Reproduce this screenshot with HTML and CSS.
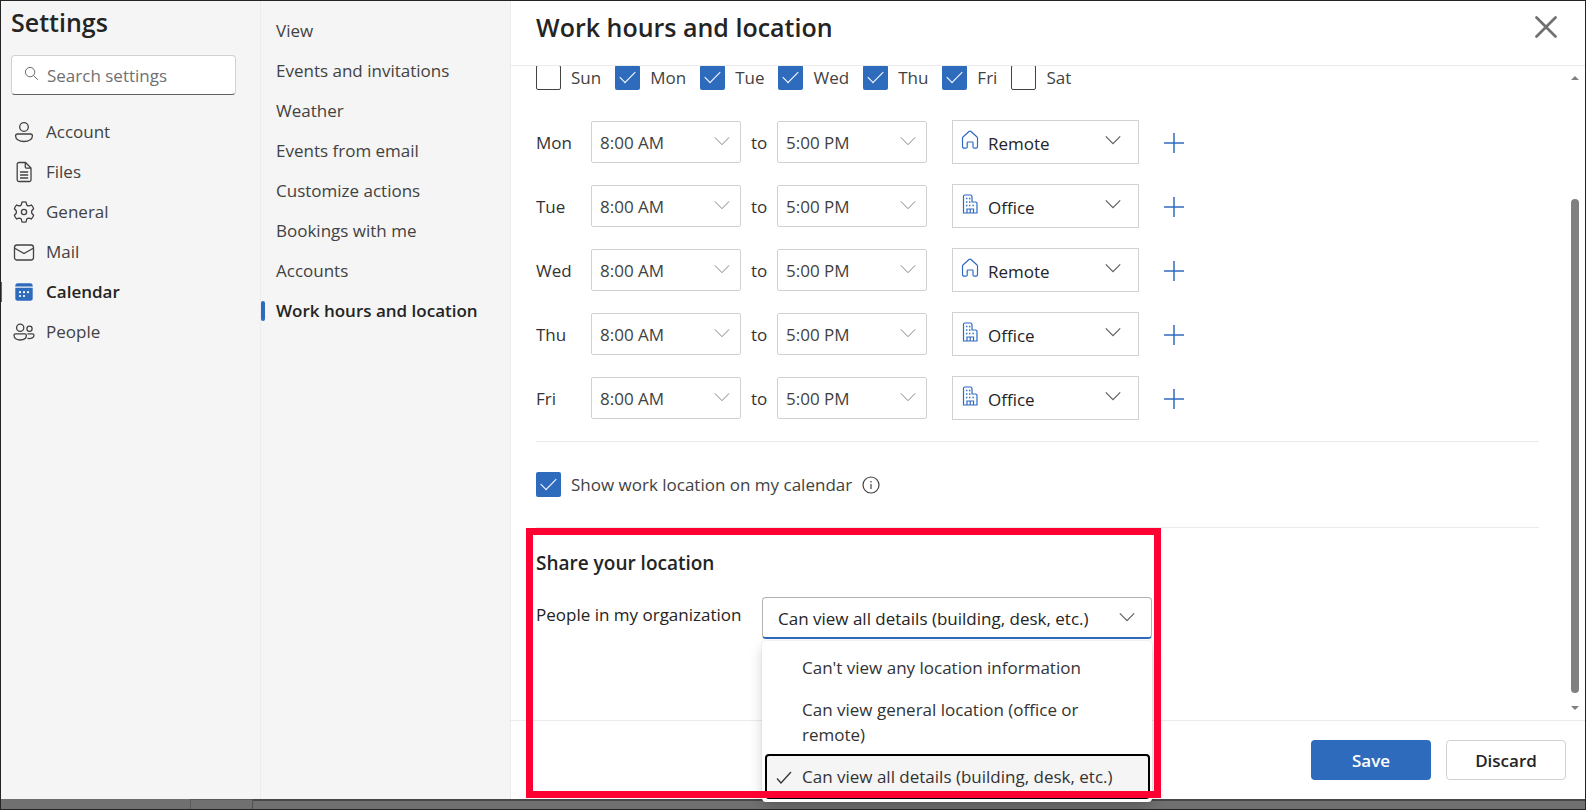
FILE: index.html
```html
<!DOCTYPE html>
<html lang="en">
<head>
<meta charset="utf-8">
<title>Settings - Work hours and location</title>
<link rel="stylesheet" href="styles.css">
</head>
<body>
<svg class="sprite" aria-hidden="true">
  <symbol id="chevron" viewBox="0 0 16 16"><path d="M.8 4.3 8 11.7l7.2-7.4"/></symbol>
  <symbol id="plus" viewBox="0 0 20 20"><path d="M10 0v20M0 10h20"/></symbol>
  <symbol id="home" viewBox="0 0 18 20"><path d="M1.5 8.2c0-.6.2-1.1.7-1.5L8 1.5c.6-.5 1.4-.5 2 0l5.800 5.200c.4.4.7.9.7 1.500v8.300c0 1-.7 1.700-1.700 1.700h-1.600c-.7 0-1.200-.5-1.200-1.200v-4.200c0-.5-.4-.8-.8-.8H7c-.5 0-.8.300-.8.800V17c0 .7-.5 1.200-1.200 1.200H3.200c-1 0-1.700-.7-1.700-1.700z"/></symbol>
  <symbol id="office" viewBox="0 0 18 20"><path d="M2.500 19V2.500C2.500 1.500 3 1 4 1h5.500c1 0 1.500.5 1.500 1.500V8h3.500c1 0 1.500.5 1.500 1.500V19zM6 19v-4h6.500v4M9.200 15v4"/><path class="dots" d="M5 4.500h1.400M8 4.500h1.400M5 8h1.400M8 8h1.400M5 11.500h1.400M8 11.500h1.400M11.500 11.500h1.400"/></symbol>
</svg>
<div class="dialog">
  <aside class="sidebar">
    <h1>Settings</h1>
    <label class="search">
      <svg viewBox="0 0 16 16"><circle cx="6.500" cy="6.500" r="5"/><path d="m10.200 10.200 4.500 4.500"/></svg>
      <input type="search" placeholder="Search settings" aria-label="Search settings">
    </label>
    <nav class="nav" aria-label="Settings sections">
      <a href="#account"><svg viewBox="0 0 22 22"><circle cx="11" cy="6" r="4.300"/><path d="M4.500 13h13c1.200 0 1.900.7 1.900 1.900 0 3.500-3.800 5.600-8.400 5.600s-8.400-2.100-8.400-5.600c0-1.200.7-1.900 1.900-1.900z"/></svg>Account</a>
      <a href="#files"><svg viewBox="0 0 22 22"><path d="M6 1.500h6.500l5.500 5.500v12c0 1-.6 1.500-1.500 1.500H6c-1 0-1.800-.6-1.800-1.500V3.200C4.200 2.100 5 1.500 6 1.500zM12.300 1.700v4c0 1 .6 1.500 1.500 1.500h4M7 11h8.200M7 14h8.200M7 17h8.200"/></svg>Files</a>
      <a href="#general"><svg viewBox="0 0 22 22"><circle cx="11" cy="11" r="2.600"/><path d="M8.900 1.200Q11 .7 13.100 1.200L13.700 3.900Q14.800 4.900 16.100 4.900L18.500 4.100Q20.100 5.700 20.600 7.800L18.800 9.700Q18.400 11 18.800 12.300L20.600 14.200Q20.100 16.300 18.500 17.900L16.100 17.100Q14.800 17.100 13.700 18.100L13.100 20.800Q11 21.300 8.900 20.800L8.300 18.100Q7.200 17.100 5.900 17.100L3.500 17.900Q1.900 16.300 1.400 14.200L3.200 12.300Q3.600 11 3.200 9.700L1.400 7.800Q1.900 5.700 3.500 4.100L5.900 4.900Q7.200 4.900 8.300 3.900z"/></svg>General</a>
      <a href="#mail"><svg viewBox="0 0 22 22"><rect x="1.500" y="4" width="19" height="15" rx="2.500"/><path d="m1.800 7.200 9.200 5.300 9.200-5.300"/></svg>Mail</a>
      <a href="#calendar" class="current" aria-current="true"><svg class="solid" viewBox="0 0 22 22"><path class="fill" d="M2.300 5.500V4.600c0-1.300 1-2.300 2.300-2.300h12.800c1.300 0 2.300 1 2.300 2.300v.9zM2.300 6.800h17.400v10.600c0 1.300-1 2.300-2.300 2.300H4.600c-1.300 0-2.300-1-2.300-2.300z"/><g class="hole"><circle cx="7" cy="11.200" r="1.100"/><circle cx="11" cy="11.200" r="1.100"/><circle cx="15" cy="11.200" r="1.100"/><circle cx="7" cy="15" r="1.100"/><circle cx="11" cy="15" r="1.100"/></g></svg>Calendar</a>
      <a href="#people"><svg viewBox="0 0 22 22"><circle cx="7.200" cy="6.800" r="3.600"/><circle cx="16.500" cy="7.800" r="2.600"/><path d="M2.500 12.800h9.400c1 0 1.500.6 1.500 1.500 0 3-2.700 4.700-6.200 4.700S1 17.300 1 14.300c0-.9.500-1.500 1.500-1.500zM14.500 12.800h5c1 0 1.500.6 1.500 1.400 0 2.400-2.600 3.800-6.500 3.200"/></svg>People</a>
    </nav>
  </aside>
  <nav class="subnav" aria-label="Calendar settings">
    <a href="#view">View</a>
    <a href="#events">Events and invitations</a>
    <a href="#weather">Weather</a>
    <a href="#email">Events from email</a>
    <a href="#actions">Customize actions</a>
    <a href="#bookings">Bookings with me</a>
    <a href="#accounts">Accounts</a>
    <a href="#hours" class="current" aria-current="page">Work hours and location</a>
  </nav>
  <main class="main">
    <header class="header">
      <h2>Work hours and location</h2>
      <button class="close" aria-label="Close"><svg viewBox="0 0 22 22"><path d="m1.500 1.500 19 19M20.500 1.500l-19 19"/></svg></button>
    </header>
    <div class="pane">
      <div class="content">
        <div class="days">
          <label><input type="checkbox">Sun</label>
          <label><input type="checkbox" checked>Mon</label>
          <label><input type="checkbox" checked>Tue</label>
          <label><input type="checkbox" checked>Wed</label>
          <label><input type="checkbox" checked>Thu</label>
          <label><input type="checkbox" checked>Fri</label>
          <label><input type="checkbox">Sat</label>
        </div>
        <div class="hours">
          <div class="row"><span>Mon</span>
            <div class="drop"><select aria-label="Monday start"><option>8:00 AM</option></select><svg><use href="#chevron"/></svg></div><span class="to">to</span>
            <div class="drop"><select aria-label="Monday end"><option>5:00 PM</option></select><svg><use href="#chevron"/></svg></div>
            <div class="drop place"><svg class="kind"><use href="#home"/></svg><select aria-label="Monday location"><option>Remote</option></select><svg><use href="#chevron"/></svg></div>
            <button class="add" aria-label="Add Monday hours"><svg><use href="#plus"/></svg></button></div>
          <div class="row"><span>Tue</span>
            <div class="drop"><select aria-label="Tuesday start"><option>8:00 AM</option></select><svg><use href="#chevron"/></svg></div><span class="to">to</span>
            <div class="drop"><select aria-label="Tuesday end"><option>5:00 PM</option></select><svg><use href="#chevron"/></svg></div>
            <div class="drop place"><svg class="kind"><use href="#office"/></svg><select aria-label="Tuesday location"><option>Office</option></select><svg><use href="#chevron"/></svg></div>
            <button class="add" aria-label="Add Tuesday hours"><svg><use href="#plus"/></svg></button></div>
          <div class="row"><span>Wed</span>
            <div class="drop"><select aria-label="Wednesday start"><option>8:00 AM</option></select><svg><use href="#chevron"/></svg></div><span class="to">to</span>
            <div class="drop"><select aria-label="Wednesday end"><option>5:00 PM</option></select><svg><use href="#chevron"/></svg></div>
            <div class="drop place"><svg class="kind"><use href="#home"/></svg><select aria-label="Wednesday location"><option>Remote</option></select><svg><use href="#chevron"/></svg></div>
            <button class="add" aria-label="Add Wednesday hours"><svg><use href="#plus"/></svg></button></div>
          <div class="row"><span>Thu</span>
            <div class="drop"><select aria-label="Thursday start"><option>8:00 AM</option></select><svg><use href="#chevron"/></svg></div><span class="to">to</span>
            <div class="drop"><select aria-label="Thursday end"><option>5:00 PM</option></select><svg><use href="#chevron"/></svg></div>
            <div class="drop place"><svg class="kind"><use href="#office"/></svg><select aria-label="Thursday location"><option>Office</option></select><svg><use href="#chevron"/></svg></div>
            <button class="add" aria-label="Add Thursday hours"><svg><use href="#plus"/></svg></button></div>
          <div class="row"><span>Fri</span>
            <div class="drop"><select aria-label="Friday start"><option>8:00 AM</option></select><svg><use href="#chevron"/></svg></div><span class="to">to</span>
            <div class="drop"><select aria-label="Friday end"><option>5:00 PM</option></select><svg><use href="#chevron"/></svg></div>
            <div class="drop place"><svg class="kind"><use href="#office"/></svg><select aria-label="Friday location"><option>Office</option></select><svg><use href="#chevron"/></svg></div>
            <button class="add" aria-label="Add Friday hours"><svg><use href="#plus"/></svg></button></div>
        </div>
        <div class="show">
          <label><input type="checkbox" checked>Show work location on my calendar</label>
          <svg viewBox="0 0 18 18"><circle cx="9" cy="9" r="8"/><path d="M9 8v5M9 5v1.500"/></svg>
        </div>
        <section class="share">
          <h3>Share your location</h3>
          <div class="share-row">
            <label for="share">People in my organization</label>
            <div class="combo">
              <div class="drop"><select id="share"><option>Can view all details (building, desk, etc.)</option></select><svg><use href="#chevron"/></svg></div>
              <ul class="menu" role="listbox" aria-label="People in my organization">
                <li role="option">Can't view any location information</li>
                <li role="option">Can view general location (office or remote)</li>
                <li role="option" class="picked" aria-selected="true"><svg viewBox="0 0 16 16"><path d="m1 9.500 4 4.500L15 3"/></svg>Can view all details (building, desk, etc.)</li>
              </ul>
            </div>
          </div>
          <div class="callout"></div>
        </section>
      </div>
      <div class="scrollbar" aria-hidden="true">
        <svg viewBox="0 0 8 4"><path d="M0 4h8L4 0z"/></svg>
        <div class="track"><div class="thumb"></div></div>
        <svg viewBox="0 0 8 4"><path d="M0 0h8L4 4z"/></svg>
      </div>
    </div>
    <footer class="footer">
      <button class="save">Save</button>
      <button class="discard">Discard</button>
    </footer>
  </main>
</div>
<div class="backdrop"><i></i><b></b><s></s></div>
</body>
</html>
```
FILE: styles.css
```css
* { box-sizing: border-box; }

body {
  margin: 0;
  min-height: 100vh;
  display: flex;
  flex-direction: column;
  border: 1px solid #242424;
  background: #fff;
  color: #424242;
  font: 17px/24px "Open Sans", "Noto Sans", sans-serif;
}

h1, h2, h3, ul { margin: 0; padding: 0; }
h1, h2, h3 { color: #242424; font-weight: 600; }
button, input, select { font: inherit; color: inherit; }
a { color: inherit; text-decoration: none; }
svg { fill: none; stroke: currentColor; flex: none; }
.sprite { position: absolute; width: 0; height: 0; }

.dialog { flex: 1; display: flex; }

.sidebar {
  width: 260px;
  padding: 4px 24px 0 10px;
  background: #f5f5f5;
  border-right: 1px solid #ececec;
}
h1 { font-size: 25px; line-height: 34px; }

.search {
  display: flex;
  align-items: center;
  gap: 8px;
  height: 40px;
  margin-top: 16px;
  padding: 2px 12px 0;
  background: #fff;
  border: 1px solid #d1d1d1;
  border-bottom-color: #616161;
  border-radius: 4px;
  color: #616161;
}
.search svg { width: 15px; height: 15px; margin-bottom: 6px; }
.search input { width: 100%; min-width: 0; border: 0; padding: 0; outline: 0; background: none; }
.search input::placeholder { color: #707070; opacity: 1; }

.nav { margin-top: 17px; }
.nav a { display: flex; align-items: center; gap: 11px; height: 40px; }
.nav svg { width: 22px; height: 22px; margin-left: 2px; stroke-width: 1.300; }
.nav .current, .subnav .current { color: #242424; font-weight: 600; }
.nav .current { margin-left: -10px; }
.nav .current::before { content: ""; width: 1px; height: 20px; background: #2f6bbd; }
.nav .current svg { margin-left: 0; }
.nav .solid { stroke: none; }
.fill { fill: #2f6bbd; }
.hole { fill: #fff; }

.subnav { width: 250px; padding-top: 10px; background: #f5f5f5; border-right: 1px solid #ececec; }
.subnav a { display: flex; align-items: center; height: 40px; padding-left: 15px; }
.subnav .current { padding: 0; gap: 11px; }
.subnav .current::before { content: ""; width: 4px; height: 20px; border-radius: 2px; background: #2f6bbd; }

.main { flex: 1; min-width: 0; display: flex; flex-direction: column; background: #fff; }
.header {
  position: relative;
  z-index: 1;
  display: flex;
  align-items: center;
  justify-content: space-between;
  height: 65px;
  padding: 0 28px 13px 25px;
  background: #fff;
  border-bottom: 1px solid #ebebeb;
}
h2 { font-size: 25px; line-height: 36px; }
.close { width: 22px; height: 22px; padding: 0; border: 0; background: none; color: #707070; }
.close svg { display: block; width: 22px; height: 22px; stroke-width: 2.700; stroke-linecap: round; }

.pane { flex: 1; display: flex; justify-content: space-between; }
.content { flex: 1; padding: 0 32px 0 25px; }

input[type="checkbox"] {
  appearance: none;
  width: 25px;
  height: 25px;
  margin: 0;
  border: 1px solid #424242;
  border-radius: 2px;
  background: #fff;
}
input[type="checkbox"]:checked { border: 0; background: #2f6bbd; display: grid; place-items: center; }
input[type="checkbox"]:checked::before {
  content: "";
  width: 15px;
  height: 8px;
  margin-bottom: 5px;
  background:
    linear-gradient(#fff, #fff) left / 1px 100% no-repeat,
    linear-gradient(#fff, #fff) bottom / 100% 1px no-repeat;
  box-shadow: -1px 1px 0 -1px #fff;
  transform: rotate(-45deg);
}
.days { display: flex; gap: 14px; margin-top: -1px; }
label { display: flex; align-items: center; gap: 10px; }

.hours { display: grid; gap: 20px; padding: 30px 0 21px; border-bottom: 1px solid #ebebeb; }
.row {
  display: grid;
  grid-template-columns: 45px 150px 16px 150px 202px 50px;
  gap: 10px;
  align-items: center;
  height: 44px;
  color: #333;
}
.row span { padding-top: 2px; }
.drop { position: relative; display: grid; color: #424242; }
.drop select {
  appearance: none;
  width: 100%;
  height: 42px;
  padding: 2px 32px 0 8px;
  border: 1px solid #d1d1d1;
  border-radius: 2px;
  background: #fff;
}
.drop svg {
  position: absolute;
  right: 11px;
  top: 12px;
  width: 16px;
  height: 16px;
  color: #858585;
  pointer-events: none;
}
.place { margin-left: 15px; color: #242424; }
.place select { height: 44px; padding-top: 3px; padding-left: 35px; border-radius: 0; }
.place svg { right: 18px; color: #616161; stroke-width: 1.200; }
.place .kind { left: 9px; top: 10px; width: 18px; height: 20px; color: #2f6bbd; }
.dots { stroke-width: 1.500; }
.add { display: grid; place-items: center; height: 44px; padding: 2px 0 0; border: 0; background: none; color: #2f6bbd; }
.add svg { width: 20px; height: 20px; stroke-width: 1.500; }

.show { display: flex; align-items: center; gap: 10px; padding: 30px 0; border-bottom: 1px solid #ebebeb; }
.show svg { width: 18px; height: 18px; stroke-width: 1.200; }

.share { position: relative; padding-top: 21px; color: #242424; }
h3 { font-size: 19px; line-height: 28px; }
.share-row { display: flex; gap: 25px; margin-top: 20px; }
.share-row > label { width: 201px; height: 36px; white-space: nowrap; }
.combo { position: relative; width: 390px; }
.combo .drop { color: #242424; }
.combo select { padding-left: 15px; border-color: #b3b3b3; border-bottom: 2px solid #2f6bbd; border-radius: 4px; }
.combo .drop svg { right: 17px; color: #616161; stroke-width: 1.200; }

.menu {
  position: absolute;
  top: 44px;
  left: 0;
  width: 100%;
  padding: 5px 2px 3px 3px;
  list-style: none;
  background: #fff;
  border-radius: 4px;
  box-shadow: 0 0 2px rgba(0, 0, 0, .14), 0 6px 14px rgba(0, 0, 0, .16);
}
.menu li { padding: 9px 32px 7px 37px; line-height: 25px; color: #333; }
.menu li + li { padding-top: 10px; }
.menu .picked {
  display: flex;
  align-items: center;
  gap: 10px;
  padding: 8px 0 8px 9px;
  border: 2px solid #000;
  border-radius: 4px;
  background: #f5f5f5;
  white-space: nowrap;
}
.menu li.picked { padding-top: 8px; }
.menu svg { width: 16px; height: 16px; stroke-width: 1.300; }

.callout {
  position: absolute;
  top: 0;
  left: -10px;
  width: 635px;
  height: 270px;
  border: 7px solid #ff0033;
  pointer-events: none;
}

.scrollbar { display: flex; flex-direction: column; align-items: center; width: 8px; margin: 10px 6px 10px 0; color: #808080; }
.scrollbar svg { width: 8px; height: 4px; fill: currentColor; stroke: none; }
.track { flex: 1; width: 8px; display: flex; flex-direction: column; padding: 119px 0 13px; }
.thumb { flex: 1; border-radius: 4px; background: #808080; }

.footer {
  display: flex;
  justify-content: flex-end;
  gap: 15px;
  padding: 19px 19px 19px 18px;
  border-top: 1px solid #ebebeb;
}
.footer button { width: 120px; height: 40px; padding: 2px 0 0; border-radius: 4px; font-weight: 600; }
.save { border: 0; background: #2f6bbd; color: #fff; }
.discard { border: 1px solid #d1d1d1; background: #fff; color: #242424; }

.backdrop { display: flex; height: 10px; background: #707070; }
.backdrop i { width: 190px; border-right: 1px solid #5a5a5a; }
.backdrop b { width: 62px; border-top: 1px solid #5a5a5a; border-right: 1px solid #505050; }
.backdrop s { flex: 1; border-top: 2px solid #484848; }
```
